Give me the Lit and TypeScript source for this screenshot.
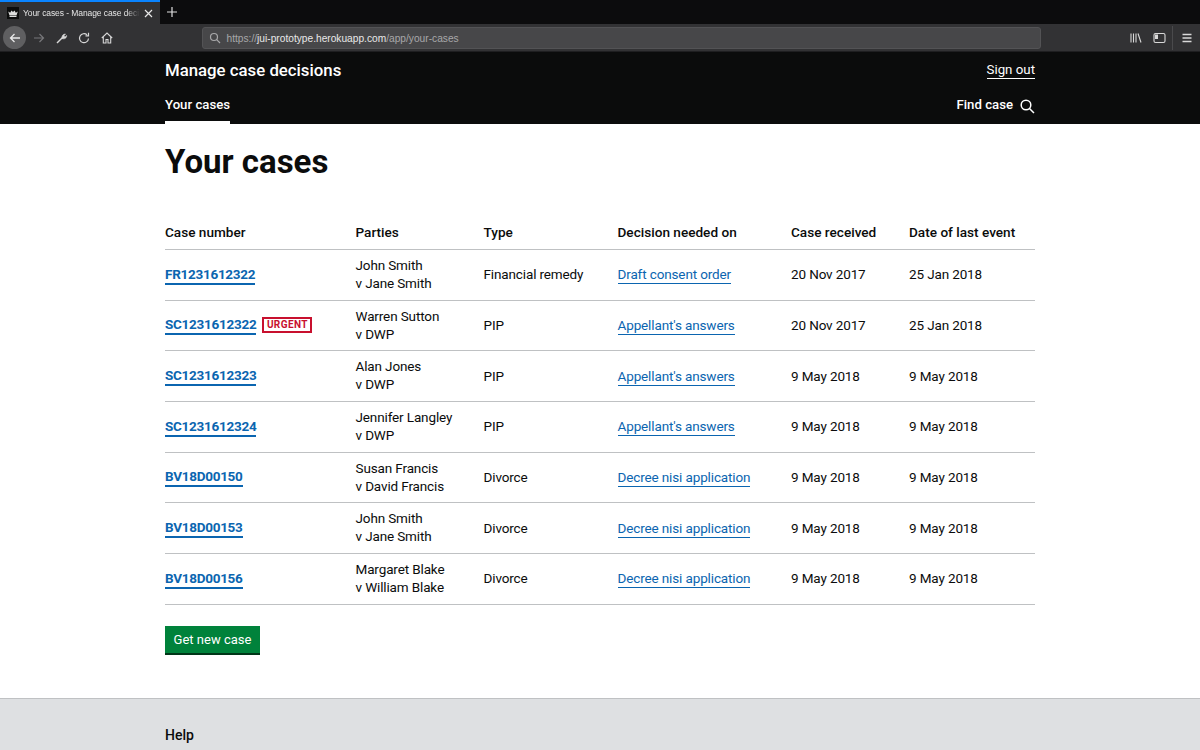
import { LitElement, html, css } from "lit";
import { customElement } from "lit/decorators.js";

type Row = { id: string; urgent?: boolean; a: string; b: string; type: string; dec: string; rec: string; last: string };
const rows: Row[] = [
  { id: "FR1231612322", a: "John Smith", b: "v Jane Smith", type: "Financial remedy", dec: "Draft consent order", rec: "20 Nov 2017", last: "25 Jan 2018" },
  { id: "SC1231612322", urgent: true, a: "Warren Sutton", b: "v DWP", type: "PIP", dec: "Appellant's answers", rec: "20 Nov 2017", last: "25 Jan 2018" },
  { id: "SC1231612323", a: "Alan Jones", b: "v DWP", type: "PIP", dec: "Appellant's answers", rec: "9 May 2018", last: "9 May 2018" },
  { id: "SC1231612324", a: "Jennifer Langley", b: "v DWP", type: "PIP", dec: "Appellant's answers", rec: "9 May 2018", last: "9 May 2018" },
  { id: "BV18D00150", a: "Susan Francis", b: "v David Francis", type: "Divorce", dec: "Decree nisi application", rec: "9 May 2018", last: "9 May 2018" },
  { id: "BV18D00153", a: "John Smith", b: "v Jane Smith", type: "Divorce", dec: "Decree nisi application", rec: "9 May 2018", last: "9 May 2018" },
  { id: "BV18D00156", a: "Margaret Blake", b: "v William Blake", type: "Divorce", dec: "Decree nisi application", rec: "9 May 2018", last: "9 May 2018" },
];

@customElement("app-root")
export class AppRoot extends LitElement {
  static styles = css`
    :host { display: block; height: 750px; overflow: hidden; background: #fff; font-family: Roboto, "Noto Sans", sans-serif; color: #0b0c0c; }
    .tabs { height: 24px; background: #0c0c0d; display: flex; align-items: stretch; }
    .tab { width: 160px; box-sizing: border-box; background: #323234; border-top: 2px solid #0a84ff; display: flex; align-items: center; padding: 0 7px; gap: 4px; color: #e4e4e4; font: 8.500px "Liberation Sans", sans-serif; letter-spacing: -0.08px; }
    .tab span { flex: 1; white-space: nowrap; -webkit-mask-image: linear-gradient(90deg, #000 88%, transparent); mask-image: linear-gradient(90deg, #000 88%, transparent); }
    .newtab { width: 24px; display: flex; align-items: center; justify-content: center; }
    .toolbar { height: 28px; box-sizing: border-box; background: #323234; border-bottom: 1px solid #1f1f21; display: flex; align-items: center; padding-left: 3px; }
    .back { width: 23px; height: 23px; border-radius: 50%; background: #5f5f61; display: flex; align-items: center; justify-content: center; }
    .navicons { display: flex; align-items: center; gap: 10.500px; margin-left: 7px; }
    .url { margin-left: 89px; width: 839px; height: 22px; box-sizing: border-box; background: #474749; border: 1px solid #535355; border-radius: 3px; display: flex; align-items: center; padding-left: 6px; gap: 6px; font: 10.200px "Liberation Sans", sans-serif; color: #a8a8a9; }
    .url span { padding-top: 2px; }
    .url b { font-weight: 400; color: #e8e8e8; }
    .tools { margin-left: 89px; display: flex; align-items: center; gap: 11px; }
    .sep { width: 1px; height: 24px; background: #4a4a4c; margin-right: -3px; margin-left: -5px; }
    svg { display: block; flex: none; }
    header { background: #0b0c0c; height: 72px; color: #fff; box-sizing: border-box; padding: 0 165px; display: flex; flex-direction: column; }
    .h1row { display: flex; flex: none; justify-content: space-between; align-items: center; height: 37px; }
    .title { font-size: 16.800px; font-weight: 500; white-space: nowrap; margin-top: -2px; }
    .signout { font-size: 13.300px; color: #fff; border-bottom: 1px solid #fff; line-height: 16px; margin-top: 0; }
    .navrow { flex: 1; display: flex; justify-content: space-between; }
    .navitem { font-size: 13.200px; font-weight: 500; border-bottom: 3px solid #fff; width: 65px; padding-top: 8px; box-sizing: border-box; white-space: nowrap; }
    .find { font-size: 13.200px; font-weight: 500; display: flex; align-items: flex-start; gap: 7px; padding-top: 8px; white-space: nowrap; }
    main { padding: 0 165px; }
    h1 { margin: 0; font-size: 33px; font-weight: 700; line-height: 46px; padding-top: 15px; height: 93px; box-sizing: border-box; }
    .table { display: grid; grid-template-columns: 190.500px 128px 134px 173.500px 118px 126px; }
    .cell { display: flex; align-items: center; border-bottom: 1px solid #bfc1c3; height: 50.670px; box-sizing: border-box; font-size: 13.500px; letter-spacing: -0.130px; line-height: 18px; color: #0b0c0c; padding-bottom: 1px; }
    .th { height: 33px; font-weight: 500; font-size: 13.600px; letter-spacing: 0; align-items: flex-start; line-height: 30px; padding-bottom: 0; }
    .stack { display: block; padding-top: 6px; }
    a { text-decoration: none; border-bottom: 1px solid #0b65b0; color: #0b65b0; line-height: 17px; margin-top: 2px; }
    a.id { font-weight: 700; font-size: 13.500px; letter-spacing: -0.270px; border-bottom-width: 2px; }
    .tag { margin-left: 6px; border: 2px solid #c8102e; color: #c8102e; font-size: 10px; font-weight: 700; height: 16px; box-sizing: border-box; width: 50px; display: flex; align-items: center; justify-content: center; letter-spacing: 0.4px; line-height: 1; }
    .btn { display: inline-flex; margin-top: 21px; width: 95px; height: 29px; box-sizing: border-box; background: #00823b; border-bottom: 2px solid #003618; padding-top: 1px; color: #fff; font-size: 13px; align-items: center; justify-content: center; }
    footer { margin-top: 43px; background: #dee0e2; border-top: 1px solid #bfc1c3; padding: 28px 165px 0; height: 60px; box-sizing: border-box; font-size: 14px; font-weight: 500; }
  `;

  render() {
    return html`
      <div class="tabs">
        <div class="tab">
          <svg width="12" height="12" viewBox="0 0 12 12"><rect width="12" height="12" fill="#0b0c0c"/><path d="M1.200 4.500l2 1.300L4.500 3.500 6 5l1.500-1.500 1.300 2.300 2-1.300L9.500 8.500h-7z" fill="#ddd"/><rect x="2.500" y="9" width="7" height="1" fill="#ddd"/></svg>
          <span>Your cases - Manage case deci</span>
          <svg width="9" height="9" viewBox="0 0 9 9"><path d="M1 1l7 7M8 1L1 8" stroke="#e8e8e8" stroke-width="1.200"/></svg>
        </div>
        <div class="newtab"><svg width="10" height="10" viewBox="0 0 10 10"><path d="M5 0v10M0 5h10" stroke="#e0e0e0" stroke-width="1.200"/></svg></div>
      </div>
      <div class="toolbar">
        <div class="back"><svg width="12" height="12" viewBox="0 0 12 12" fill="none" stroke="#e8e8e8" stroke-width="1.300"><path d="M11 6H1.500M5.500 2 1.500 6l4 4"/></svg></div>
        <div class="navicons">
          <svg width="12" height="12" viewBox="0 0 12 12" fill="none" stroke="#77777a" stroke-width="1.200"><path d="M1 6h9.500M6.500 2l4 4-4 4"/></svg>
          <svg width="12" height="12" viewBox="0 0 12 12" fill="none" stroke="#d8d8d8" stroke-width="1.500"><path d="M1 11l5.500-5.500"/><path d="M6 6.500C5.500 4 7 2 9.500 2L8 3.800l1 1.200L10.700 3.500C10.800 6 8.500 7.500 6 6.500z" fill="#d8d8d8" stroke-width=".6"/></svg>
          <svg width="12" height="12" viewBox="0 0 12 12" fill="none" stroke="#d8d8d8" stroke-width="1.200"><path d="M10.500 6.500A4.500 4.500 0 1 1 9 2.800"/><path d="M10.500 .8v3h-3" /></svg>
          <svg width="12" height="12" viewBox="0 0 12 12" fill="none" stroke="#d8d8d8" stroke-width="1.100"><path d="M.8 6 6 1l5.200 5M2.300 5v6h2.700V7.500h2V11h2.700V5"/></svg>
        </div>
        <div class="url">
          <svg width="12" height="12" viewBox="0 0 12 12" fill="none" stroke="#a8a8a9" stroke-width="1.200"><circle cx="5" cy="5" r="3.500"/><path d="M7.700 7.700 11 11"/></svg>
          <span>https://<b>jui-prototype.herokuapp.com</b>/app/your-cases</span>
        </div>
        <div class="tools">
          <svg width="12" height="12" viewBox="0 0 12 12" fill="none" stroke="#d8d8d8" stroke-width="1.100"><path d="M1 1.500v9M3.500 1.500v9M6 1.500v9M8 1.500l3 9"/></svg>
          <svg width="13" height="12" viewBox="0 0 13 12" fill="none" stroke="#d8d8d8" stroke-width="1.100"><rect x="1" y="1.500" width="11" height="9" rx="1.500"/><path d="M2 2.500h3v4.500H2z" fill="#d8d8d8" stroke="none"/></svg>
          <div class="sep"></div>
          <svg width="12" height="12" viewBox="0 0 12 12" stroke="#d8d8d8" stroke-width="1.300"><path d="M1.500 2.500h9M1.500 6h9M1.500 9.500h9"/></svg>
        </div>
      </div>
      <header>
        <div class="h1row"><div class="title">Manage case decisions</div><div class="signout">Sign out</div></div>
        <div class="navrow">
          <div class="navitem">Your cases</div>
          <div class="find">Find case
            <svg width="15" height="15" viewBox="0 0 15 15" fill="none" stroke="#fff" stroke-width="1.500" style="margin-top:2px"><circle cx="6" cy="6" r="4.800"/><path d="M9.500 9.500 14 14"/></svg>
          </div>
        </div>
      </header>
      <main>
        <h1>Your cases</h1>
        <div class="table">
          ${["Case number", "Parties", "Type", "Decision needed on", "Case received", "Date of last event"].map((h) => html`<div class="cell th">${h}</div>`)}
          ${rows.map((r) => html`
            <div class="cell"><a class="id" href="#">${r.id}</a>${r.urgent ? html`<span class="tag">URGENT</span>` : ""}</div>
            <div class="cell stack">${r.a}<br />${r.b}</div>
            <div class="cell">${r.type}</div>
            <div class="cell"><a href="#">${r.dec}</a></div>
            <div class="cell">${r.rec}</div>
            <div class="cell">${r.last}</div>
          `)}
        </div>
        <div class="btn">Get new case</div>
      </main>
      <footer>Help</footer>
    `;
  }
}
